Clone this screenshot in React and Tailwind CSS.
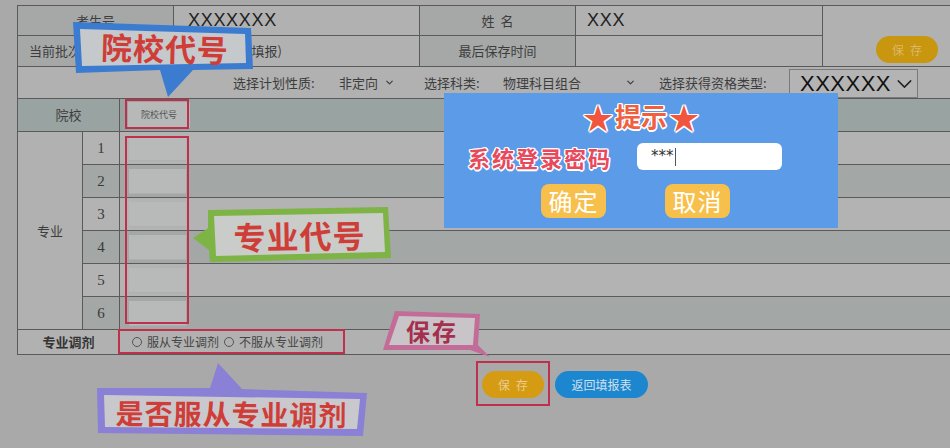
import React from "react";
import { ChevronDown } from "lucide-react";

const outline =
  "[text-shadow:1.5px_0_0_#fff,-1.5px_0_0_#fff,0_1.5px_0_#fff,0_-1.5px_0_#fff,1px_1px_0_#fff,-1px_-1px_0_#fff,1px_-1px_0_#fff,-1px_1px_0_#fff]";

function BodyRow({ n, dark }) {
  return (
    <div className="flex h-[33px] border-b border-[#5a5a5a]">
      <div
        className={
          "w-[37px] border-r border-[#5a5a5a] flex items-center justify-center font-['Liberation_Serif',serif] text-[15px] text-[#3a3a3a] " +
          (dark ? "bg-[#a3a7a5]" : "bg-[#b3b3b3]")
        }
      >
        {n}
      </div>
      <div
        className={
          "w-[70px] flex items-center pl-[9px] " +
          (dark ? "bg-[#a3a7a5]" : "bg-[#b3b3b3]")
        }
      >
        <div className="w-[57px] h-[25px] bg-[#b8b9b9] border-b border-[#aeb0b0]" />
      </div>
      <div className={"flex-1 " + (dark ? "bg-[#a3a7a5]" : "bg-[#b3b3b3]")} />
    </div>
  );
}

export default function App() {
  const cell = "border-r border-b border-[#5a5a5a] flex items-center";
  const label = cell + " bg-[#a6a8a7] justify-center text-[13px] text-[#3d3d3d]";
  return (
    <div className="relative w-[950px] h-[448px] overflow-hidden bg-[#a9a9a9] font-['Noto_Sans_CJK_SC','Noto_Sans',sans-serif] text-[#3c3c3c]">
      <div className="pl-[17px] pt-[5px]">
        <div className="w-[960px] border-t border-l border-[#5a5a5a] bg-[#b1b1b1]">
          {/* rows 1-2 */}
          <div className="grid grid-cols-[156px_246px_156px_247px_155px] grid-rows-[30px_31px]">
            <div className={label}>考生号</div>
            <div className={cell + " pl-[14px] font-['Liberation_Sans',sans-serif] text-[18px] tracking-[0.7px] text-[#222]"}>
              XXXXXXX
            </div>
            <div className={label}>姓&nbsp;&nbsp;名</div>
            <div className={cell + " pl-[11px] font-['Liberation_Sans',sans-serif] text-[18px] tracking-[0.7px] text-[#222]"}>
              XXX
            </div>
            <div className="row-span-2 border-b border-[#5a5a5a] flex items-start pt-[30px] pl-[53px]">
              <div className="w-[62px] h-[27px] rounded-full bg-[#c8960f] flex items-center justify-center text-[12px] text-[#dcb866] tracking-[6px] pl-[6px]">
                保存
              </div>
            </div>
            <div className={cell + " bg-[#a6a8a7] pl-[11px] text-[13px] text-[#3d3d3d]"}>当前批次</div>
            <div className={cell + " pl-[8px] text-[13px] text-[#3d3d3d]"}>本科批(志愿填报)</div>
            <div className={label}>最后保存时间</div>
            <div className={cell} />
          </div>

          {/* filter row */}
          <div className="h-[32px] border-b border-[#5a5a5a] flex items-center pl-[215px] text-[13px] text-[#3d3d3d]">
            <span className="w-[106px]">选择计划性质:</span>
            <span className="w-[85px] flex items-center gap-[6px]">
              非定向
              <ChevronDown size={11} strokeWidth={2.5} />
            </span>
            <span className="w-[79px]">选择科类:</span>
            <span className="w-[156px] flex items-center">
              <span className="w-[122px]">物理科目组合</span>
              <ChevronDown size={11} strokeWidth={2.5} />
            </span>
            <span className="w-[130px]">选择获得资格类型:</span>
            <div className="w-[129px] h-[29px] mt-[2px] border border-[#7a7a7a] bg-[#b4b4b4] flex items-center pl-[10px] gap-[1px]">
              <span className="font-['Liberation_Sans',sans-serif] text-[22px] text-[#111] tracking-[0.5px] leading-none">
                XXXXXX
              </span>
              <ChevronDown size={26} strokeWidth={1.4} className="text-[#222]" />
            </div>
          </div>

          {/* header row */}
          <div className="h-[33px] border-b border-[#5a5a5a] flex bg-[#99a3a1]">
            <div className="w-[102px] border-r border-[#5a5a5a] flex items-center justify-center text-[13px] text-[#3d3d3d]">
              院校
            </div>
            <div className="w-[70px] flex items-center pl-[8px]">
              <div className="w-[62px] h-[26px] bg-[#b6b9b8] flex items-center justify-center text-[9px] text-[#555]">
                院校代号
              </div>
            </div>
            <div className="flex-1" />
          </div>

          {/* body rows */}
          <div className="flex">
            <div className="w-[65px] border-r border-b border-[#5a5a5a] bg-[#b1b1b1] flex items-center justify-center text-[13px] text-[#3d3d3d]">
              专业
            </div>
            <div className="flex-1 flex flex-col">
              {[1, 2, 3, 4, 5, 6].map((n) => (
                <BodyRow key={n} n={n} dark={n % 2 === 0} />
              ))}
            </div>
          </div>

          {/* adjust row */}
          <div className="h-[25px] border-b border-[#5a5a5a] flex bg-[#b1b1b1]">
            <div className="w-[102px] border-r border-[#5a5a5a] flex items-center justify-center text-[13px] font-bold text-[#333]">
              专业调剂
            </div>
            <div className="flex items-center pl-[12px] text-[12px] text-[#444]">
              <span className="w-[10px] h-[10px] rounded-full border border-[#555] mr-[5px]" />
              <span className="mr-[5px]">服从专业调剂</span>
              <span className="w-[10px] h-[10px] rounded-full border border-[#555] mr-[5px]" />
              <span>不服从专业调剂</span>
            </div>
          </div>
        </div>
      </div>

      {/* bottom buttons */}
      <div className="mt-[16px] pl-[482px] flex gap-[11px]">
        <div className="w-[62px] h-[27px] rounded-full bg-[#d59b12] flex items-center justify-center text-[12px] text-[#eacb92] tracking-[6px] pl-[6px]">
          保存
        </div>
        <div className="w-[93px] h-[27px] rounded-full bg-[#1c86cf] flex items-center justify-center text-[12px] text-[#cfe0ee]">
          返回填报表
        </div>
      </div>

      {/* annotation shapes */}
      <svg className="absolute left-0 top-0 pointer-events-none" width="950" height="448" viewBox="0 0 950 448">
        <polygon points="73,22 251,28 253,69 193,70 168,97 160,70 76,73" fill="#3b7cd0" />
        <polygon points="80,29 245,34 246,63 82,66" fill="#c6c9cc" />
        <polygon points="208,210 388,207 391,258 210,262 209,250 193,238 208,228" fill="#7db445" />
        <polygon points="214,216 383,213 385,252 216,256" fill="#c9ccc8" />
        <polygon points="97,388 210,388 218,363 242,389 367,393 363,436 98,433" fill="#8a80d6" />
        <polygon points="104,395 360,399 357,429 105,427" fill="#c9c8cc" />
        <polygon points="395,311 480,314 478,345 490,357 470,350 383,350" fill="#c46c98" />
        <polygon points="399,316 475,318 473,345 389,345" fill="#c9c4c8" />
      </svg>

      {/* annotation texts */}
      <div className="absolute left-[84px] top-[29px] w-[162px] h-[36px] flex items-center justify-center rotate-[1.5deg] text-[31px] leading-none font-bold text-[#cf3d38] tracking-[1px]">
        院校代号
      </div>
      <div className="absolute left-[214px] top-[215px] w-[171px] h-[40px] flex items-center justify-center -rotate-[1deg] text-[32px] leading-none font-bold text-[#cf3d38] tracking-[1px]">
        专业代号
      </div>
      <div className="absolute left-[104px] top-[396px] w-[255px] h-[33px] flex items-center justify-center rotate-[0.5deg] text-[28px] leading-none font-bold text-[#cf3d38] tracking-[1px]">
        是否服从专业调剂
      </div>
      <div className="absolute left-[390px] top-[316px] w-[84px] h-[30px] flex items-center justify-center text-[24px] leading-none font-bold text-[#a52f4e] tracking-[2px]">
        保存
      </div>

      {/* red boxes */}
      <div className="absolute left-[125px] top-[99px] w-[64px] h-[30px] border-2 border-[#bf304c]" />
      <div className="absolute left-[125px] top-[136px] w-[64px] h-[188px] border-2 border-[#bf304c]" />
      <div className="absolute left-[118px] top-[329px] w-[227px] h-[25px] border-2 border-[#bf304c]" />
      <div className="absolute left-[476px] top-[361px] w-[74px] h-[45px] border-2 border-[#bf304c]" />

      {/* dialog */}
      <div className="absolute left-[444px] top-[93px] w-[394px] h-[135px] bg-[#5b9be8] flex flex-col pt-[8px]">
        <div className="h-[30px] flex items-center justify-center gap-[2px]">
          <span className={"text-[30px] leading-none text-[#f2553d] " + outline}>★</span>
          <span className={"text-[26px] leading-none font-bold text-[#f0603f] " + outline}>提示</span>
          <span className={"text-[30px] leading-none text-[#f2553d] " + outline}>★</span>
        </div>
        <div className="mt-[12px] h-[27px] flex items-center pl-[24px]">
          <span className={"w-[169px] text-[22px] leading-none font-bold text-[#e8495c] tracking-[2px] " + outline}>
            系统登录密码
          </span>
          <div className="w-[145px] h-[27px] rounded-[6px] bg-white flex items-center pl-[14px]">
            <span className="font-['DejaVu_Sans',sans-serif] text-[15px] text-[#333] leading-none">***</span>
            <span className="w-px h-[18px] bg-[#555] ml-[1px]" />
          </div>
        </div>
        <div className="mt-[14px] flex pl-[97px] gap-[59px]">
          <div className="w-[65px] h-[34px] rounded-[8px] bg-[#f7c04c] flex items-center justify-center text-[24px] leading-none text-white tracking-[1px]">
            确定
          </div>
          <div className="w-[65px] h-[34px] rounded-[8px] bg-[#f7c04c] flex items-center justify-center text-[24px] leading-none text-white tracking-[1px]">
            取消
          </div>
        </div>
      </div>
    </div>
  );
}
